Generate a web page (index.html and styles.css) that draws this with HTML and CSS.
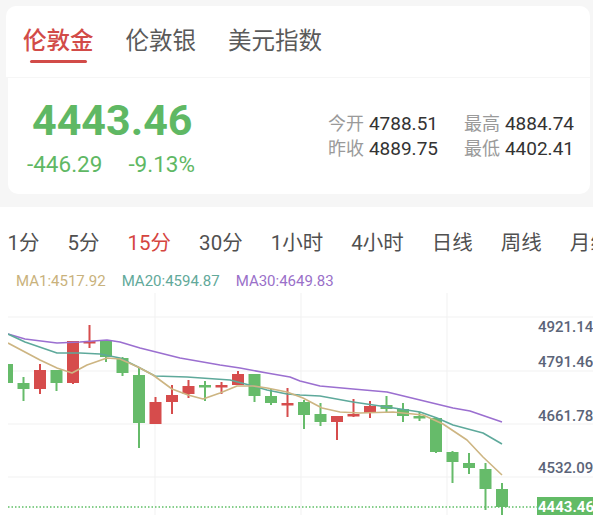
FILE: index.html
```html
<!DOCTYPE html>
<html lang="zh">
<head>
<meta charset="utf-8">
<title>伦敦金</title>
<link rel="stylesheet" href="styles.css">
</head>
<body>
<div class="page">
  <div class="tabs">
    <div class="tab active">伦敦金</div>
    <div class="tab">伦敦银</div>
    <div class="tab">美元指数</div>
  </div>
  <div class="quote">
    <div class="price-block">
      <div class="price">4443.46</div>
      <div class="change"><span>-446.29</span><span>-9.13%</span></div>
    </div>
    <div class="stats">
      <span class="lbl">今开</span><span class="val">4788.51</span>
      <span class="lbl">最高</span><span class="val">4884.74</span>
      <span class="lbl">昨收</span><span class="val">4889.75</span>
      <span class="lbl">最低</span><span class="val">4402.41</span>
    </div>
  </div>
  <div class="chart-section">
    <div class="periods">
      <span>1分</span><span>5分</span><span class="sel">15分</span><span>30分</span><span>1小时</span><span>4小时</span><span>日线</span><span>周线</span><span>月线</span>
    </div>
    <div class="legend">
      <span class="ma1">MA1:4517.92</span><span class="ma20">MA20:4594.87</span><span class="ma30">MA30:4649.83</span>
    </div>
    <svg class="chart" viewBox="0 293 593 222" width="593" height="222">
      <defs><clipPath id="plot"><rect x="8" y="290" width="530" height="230"/></clipPath></defs>
      <g class="grid">
        <line x1="8" y1="317" x2="593" y2="317"/>
        <line x1="8" y1="371" x2="593" y2="371"/>
        <line x1="8" y1="424" x2="593" y2="424"/>
        <line x1="8" y1="477" x2="593" y2="477"/>
        <line x1="155" y1="290" x2="155" y2="515"/>
        <line x1="301" y1="290" x2="301" y2="515"/>
        <line x1="447" y1="290" x2="447" y2="515"/>
      </g>
      <line class="dots" x1="8" y1="507" x2="537" y2="507"/>
      <g clip-path="url(#plot)">
        <g class="up">
          <rect x="1" y="364" width="12" height="19"/>
          <rect x="22.5" y="377" width="2" height="24"/><rect x="17.5" y="383" width="12" height="6"/>
          <rect x="55.5" y="370" width="2" height="21"/><rect x="50.5" y="370" width="12" height="13"/>
          <rect x="105" y="340" width="2" height="22"/><rect x="100" y="341" width="12" height="16"/>
          <rect x="121.5" y="357" width="2" height="19"/><rect x="116.5" y="358" width="12" height="15"/>
          <rect x="138" y="368" width="2" height="80"/><rect x="133" y="375" width="12" height="48"/>
          <rect x="204" y="381" width="2" height="20"/><rect x="199" y="385" width="12" height="2.5"/>
          <rect x="253.5" y="374" width="2" height="28"/><rect x="248.5" y="374" width="12" height="22"/>
          <rect x="270" y="389" width="2" height="16"/><rect x="265" y="396" width="12" height="7"/>
          <rect x="303" y="400" width="2" height="29"/><rect x="298" y="402" width="12" height="13"/>
          <rect x="319.5" y="403" width="2" height="23"/><rect x="314.5" y="414" width="12" height="8"/>
          <rect x="385.5" y="396" width="2" height="16"/><rect x="380.5" y="405" width="12" height="4"/>
          <rect x="402" y="403" width="2" height="19"/><rect x="397" y="409" width="12" height="7"/>
          <rect x="418.5" y="412" width="2" height="9"/><rect x="413.5" y="416" width="12" height="2.5"/>
          <rect x="435" y="418" width="2" height="35"/><rect x="430" y="418" width="12" height="34"/>
          <rect x="451.5" y="451" width="2" height="32"/><rect x="446.5" y="452" width="12" height="10"/>
          <rect x="468" y="453" width="2" height="21"/><rect x="463" y="463" width="12" height="5"/>
          <rect x="484.5" y="463" width="2" height="47"/><rect x="479.5" y="469" width="12" height="20"/>
          <rect x="501" y="483" width="2" height="32"/><rect x="496" y="489" width="12" height="18"/>
        </g>
        <g class="down">
          <rect x="39" y="364" width="2" height="30"/><rect x="34" y="370" width="12" height="19"/>
          <rect x="72" y="341" width="2" height="43"/><rect x="67" y="341" width="12" height="42"/>
          <rect x="88.5" y="325" width="2" height="23"/><rect x="83.5" y="341" width="12" height="2.5"/>
          <rect x="154.5" y="397" width="2" height="27"/><rect x="149.5" y="402" width="12" height="22"/>
          <rect x="171" y="385" width="2" height="29"/><rect x="166" y="395" width="12" height="7"/>
          <rect x="187.5" y="380" width="2" height="18"/><rect x="182.5" y="386" width="12" height="8"/>
          <rect x="220.5" y="382" width="2" height="12"/><rect x="215.5" y="385" width="12" height="2.5"/>
          <rect x="237" y="371" width="2" height="14"/><rect x="232" y="374" width="12" height="11"/>
          <rect x="286.5" y="388" width="2" height="29"/><rect x="281.5" y="403" width="12" height="2.5"/>
          <rect x="336" y="416" width="2" height="24"/><rect x="331" y="416" width="12" height="6"/>
          <rect x="352.5" y="399" width="2" height="18"/><rect x="347.5" y="414" width="12" height="2.5"/>
          <rect x="369" y="401" width="2" height="17"/><rect x="364" y="406" width="12" height="7"/>
        </g>
        <polyline class="l30" points="8,334 25,339 57,343 80,342 107,340 120,342 140,348 180,358 220,365 240,368 267,373 290,377 300,381 320,386 353,389 387,392 420,400 453,408 470,411 502,422"/>
        <polyline class="l20" points="8,334 25,342 57,353 80,353 100,354 120,358 140,368 155,376 187,377 230,380 253,386 267,390 287,394 300,395 320,396 353,402 387,407 420,412 437,418 453,425 483,433 502,444"/>
        <polyline class="l1" points="8,343 40,360 57,368 72,373 87,365 107,358 120,359 138,367 153,375 172,389 188,395 203,399 220,393 237,386 253,386 267,388 287,392 303,398 322,408 340,412 360,413 393,412 423,415 443,424 467,440 483,457 502,475"/>
      </g>
      <g class="axis">
        <text x="538" y="332">4921.14</text>
        <text x="538" y="366.5">4791.46</text>
        <text x="538" y="420.5">4661.78</text>
        <text x="538" y="472.5">4532.09</text>
      </g>
      <rect class="cur-bg" x="537" y="497" width="56" height="18"/>
      <text class="cur" x="538" y="511.5">4443.46</text>
    </svg>
  </div>
</div>
</body>
</html>
```
FILE: styles.css
```css
* { box-sizing: border-box; }
html, body { margin: 0; padding: 0; }
body {
  width: 593px;
  height: 515px;
  overflow: hidden;
  background: #f6f6f6;
  font-family: Roboto, "Noto Sans CJK SC", sans-serif;
}
.page { display: flex; flex-direction: column; }

.tabs {
  margin: 6px 3px 0 6px;
  height: 71px;
  background: #fff;
  border-radius: 10px 10px 0 0;
  display: flex;
  gap: 32px;
  padding: 20px 0 0 17px;
}
.tab {
  position: relative;
  font-size: 23.5px;
  line-height: 30px;
  color: #5a5a5a;
}
.tab.active { color: #d24b48; font-weight: 500; }
.tab.active::after {
  content: "";
  position: absolute;
  left: 7px;
  right: 7px;
  top: 34px;
  height: 3px;
  border-radius: 2px;
  background: #d24b48;
}

.quote {
  margin: 1px 3px 0 8px;
  height: 116px;
  background: #fff;
  border-radius: 0 0 10px 10px;
  display: flex;
  align-items: flex-start;
  justify-content: space-between;
  padding: 0 16px 0 19px;
}
.price-block { padding-top: 19.5px; color: #5fb864; }
.price {
  font-size: 43px;
  line-height: 44px;
  font-weight: 700;
  padding-left: 5px;
}
.change {
  margin-top: 11.5px;
  font-size: 22.5px;
  line-height: 22px;
  display: flex;
  gap: 26px;
}
.stats {
  padding-top: 32.5px;
  display: grid;
  grid-template-columns: 36px 90px 36px auto;
  column-gap: 5px;
  align-content: start;
  font-size: 18px;
  line-height: 25px;
}
.lbl { color: #9a9a9a; }
.val { color: #333; font-size: 19px; }

.chart-section {
  margin-top: 13px;
  background: #fff;
  height: 308px;
}
.periods {
  display: flex;
  gap: 28px;
  padding: 23px 0 0 7.5px;
  font-size: 20.5px;
  line-height: 26px;
  color: #505050;
  white-space: nowrap;
  overflow: hidden;
}
.periods span { flex: none; }
.periods .sel { color: #d5453f; }
.legend {
  display: flex;
  gap: 16px;
  margin-top: 15.5px;
  padding-left: 16px;
  font-size: 15px;
  line-height: 18px;
}
.ma1 { color: #c9b27c; }
.ma20 { color: #62a99a; }
.ma30 { color: #9a70c9; }

.chart { display: block; margin-top: 3.5px; }
.grid line { stroke: #f1f1f1; stroke-width: 1; }
.dots { stroke: #5fbf66; stroke-width: 1.5; stroke-dasharray: 1.5 2; }
.up rect { fill: #66bb6a; }
.down rect { fill: #d64c4c; }
polyline { fill: none; stroke-width: 1.6; stroke-linejoin: round; }
.l30 { stroke: #9b6fd0; }
.l20 { stroke: #5ea99b; }
.l1 { stroke: #cdb582; }
.axis text { font-family: Roboto, sans-serif; font-size: 15px; fill: #5b6478; font-weight: 500; }
.cur-bg { fill: #62bb66; }
.cur { font-family: Roboto, sans-serif; font-size: 15px; fill: #fff; font-weight: 700; }
```
